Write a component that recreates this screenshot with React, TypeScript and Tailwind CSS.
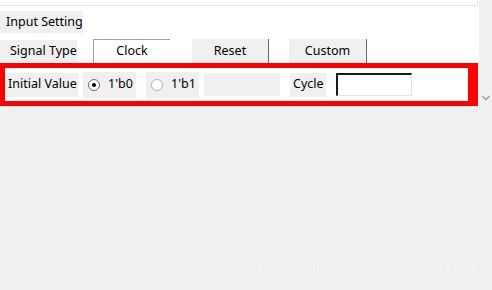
import React from "react";

const font = { fontFamily: '"Noto Sans", "Noto Sans CJK SC", sans-serif' };

function Radio({ checked }: { checked: boolean }) {
  return (
    <svg width="12" height="12" viewBox="0 0 12 12" className="shrink-0">
      <circle cx="6" cy="6" r="5.5" fill="#ffffff" stroke={checked ? "#6e6e6e" : "#b0b0b0"} />
      {checked && <circle cx="6" cy="6" r="2" fill="#000000" />}
    </svg>
  );
}

export default function App() {
  return (
    <div
      className="relative w-[492px] h-[290px] bg-[#f0f0f0] overflow-hidden text-[12.5px] text-black leading-none whitespace-nowrap"
      style={font}
    >
      <div className="flex">
        <div className="w-[478px] h-[106px] bg-white flex flex-col">
          <div className="h-[6px] w-[478px] border-b border-r border-[#e3e3e3]" />
          {/* Row 1 */}
          <div className="mt-[5px] flex">
            <div className="w-[83px] h-[22px] bg-[#f0f0f0] flex items-center pl-[6px]">Input Setting</div>
          </div>
          {/* Row 2 */}
          <div className="mt-[6px] flex items-start">
            <div className="mt-[1px] w-[77px] h-[22px] bg-[#f0f0f0] flex items-center pl-[10px]">Signal Type</div>
            <div className="ml-[16px] w-[77px] h-[24px] bg-white border-l border-t border-[#a0a0a0] flex items-center justify-center">
              Clock
            </div>
            <div className="ml-[22px] w-[77px] h-[25px] bg-[#f0f0f0] border-r border-b border-[#696969] flex items-center justify-center">
              Reset
            </div>
            <div className="ml-[20px] w-[78px] h-[25px] bg-[#f0f0f0] border-r border-b border-[#696969] flex items-center justify-center">
              Custom
            </div>
          </div>
          {/* Red framed row */}
          <div className="-mt-[1px] h-[43px] w-[478px] border-t-[5px] border-b-[5px] border-l-[5px] border-r-[10px] border-[#ff0000] flex items-center">
            <div className="w-[73px] h-[24px] bg-[#f0f0f0] flex items-center pl-[3px]">Initial Value</div>
            <div className="ml-[5px] w-[53px] h-[26px] bg-[#f0f0f0] flex items-center pl-[5px] gap-[8px]">
              <Radio checked />
              <span>1'b0</span>
            </div>
            <div className="ml-[10px] w-[53px] h-[26px] bg-[#f0f0f0] flex items-center pl-[5px] gap-[8px]">
              <Radio checked={false} />
              <span>1'b1</span>
            </div>
            <div className="ml-[5px] w-[76px] h-[23px] bg-[#f0f0f0]" />
            <div className="ml-[10px] w-[36px] h-[24px] bg-[#f0f0f0] flex items-center pl-[3px]">Cycle</div>
            <div className="ml-[10px] w-[76px] h-[23px] bg-white border-t-2 border-l-2 border-r border-b border-t-[#1a1a1a] border-l-[#1a1a1a] border-r-[#e3e3e3] border-b-[#e3e3e3]" />
          </div>
        </div>
        <div className="w-[14px] h-[106px] bg-[#f0f0f0] border-l border-white flex flex-col justify-end items-center pb-[5px]">
          <svg width="8" height="6" viewBox="0 0 8 6">
            <path d="M0.5 1 L4 4.5 L7.5 1" fill="none" stroke="#a6a6a6" strokeWidth="1.6" />
          </svg>
        </div>
      </div>
      <div
        className="absolute left-[211px] top-[262px] text-[15.6px] text-[#f7f7f7]"
        style={{ fontFamily: '"Liberation Sans", Arial, sans-serif', textShadow: "0 0 1px #e2e2e2" }}
      >
        https://blog.csdn.net/weixin_39103184
      </div>
    </div>
  );
}
